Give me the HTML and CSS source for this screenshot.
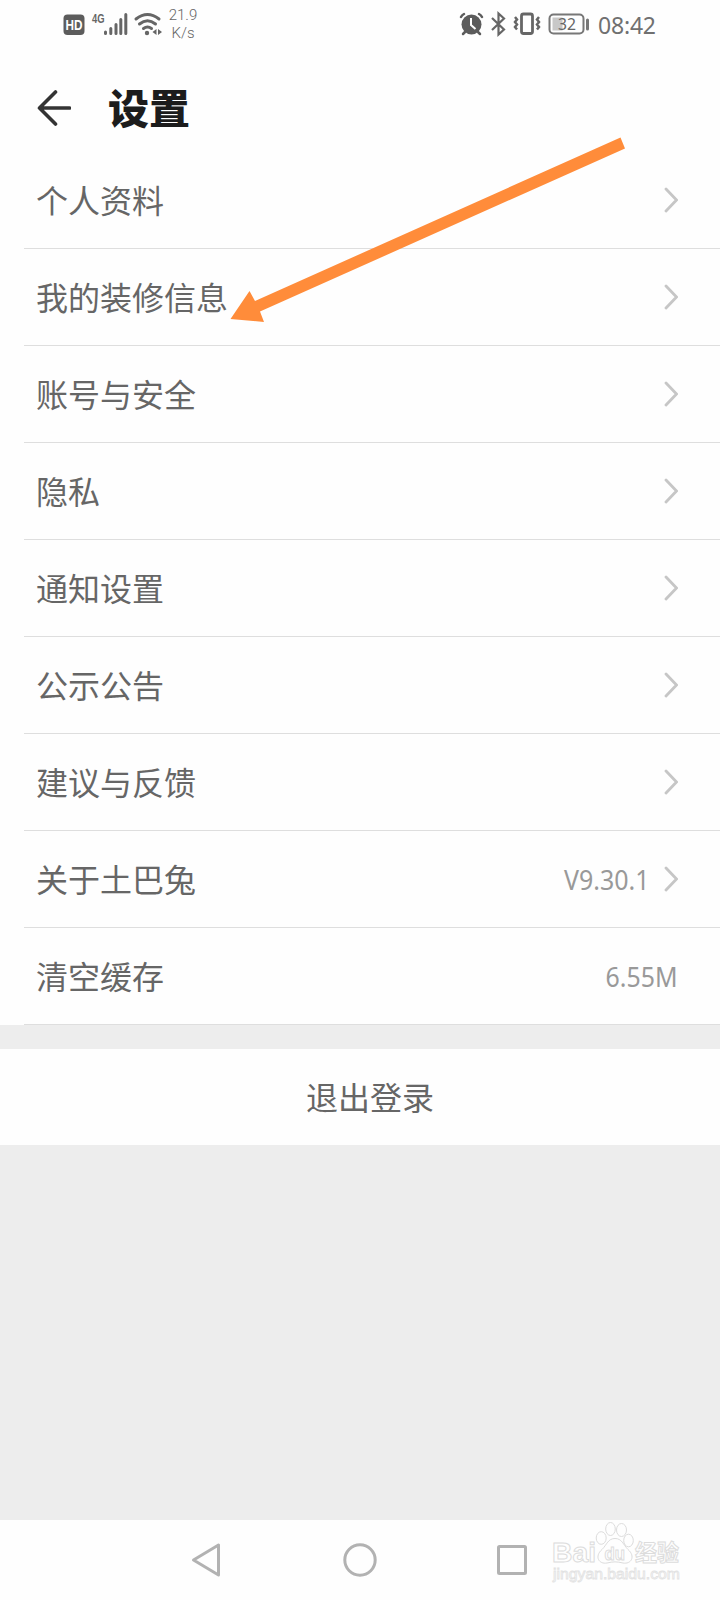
FILE: index.html
```html
<!DOCTYPE html>
<html lang="zh-CN">
<head>
<meta charset="utf-8">
<title>设置</title>
<link rel="stylesheet" href="styles.css">
</head>
<body>
<div class="screen">
  <header class="status">
    <svg class="status-left" width="112" height="48" viewBox="0 0 112 48">
      <rect x="0.5" y="14.500" width="21" height="20.500" rx="4" fill="#5c5c5c"/>
      <text class="hd" x="2.500" y="29.500" textLength="17" lengthAdjust="spacingAndGlyphs">HD</text>
      <text class="net" x="29" y="22.500" textLength="12.500" lengthAdjust="spacingAndGlyphs">4G</text>
      <path d="M42.500 32v1.500M47.800 28.500v5M53 24.500v9M57.800 19.500v14M62.800 14.500v19" stroke="#666" stroke-width="3" stroke-linecap="round"/>
      <g fill="none" stroke="#666" stroke-width="3" stroke-linecap="round">
        <path d="M73 19Q84.500 10 96 19"/><path d="M76.500 24Q84.500 17.500 92.500 24"/><path d="M80.500 28.500Q84.500 25.500 88.500 28.500"/>
      </g>
      <circle cx="84" cy="33" r="2.200" fill="#666"/>
      <path d="M93.500 29v6l-4-3zM95 29v6l4-3z" fill="#666"/>
    </svg>
    <div class="speed"><span>21.9</span><span>K/s</span></div>
    <div class="spacer"></div>
    <svg class="status-right" width="132" height="48" viewBox="458 0 132 48">
      <circle cx="471.500" cy="24.500" r="10" fill="#5c5c5c"/>
      <path d="M471 18v7l4.500 4" fill="none" stroke="#fff" stroke-width="2"/>
      <path d="M461 17q1-2 3-3M482 17q-1-2-3-3M465 32l-2 2M478 32l2 2" fill="none" stroke="#5c5c5c" stroke-width="2.500" stroke-linecap="round"/>
      <path d="M492 18l12 11.500-5.500 5v-21l5.500 5L492 30" fill="none" stroke="#666" stroke-width="2.200"/>
      <rect x="521.500" y="14" width="11" height="19.500" rx="2" fill="none" stroke="#666" stroke-width="2.800"/>
      <path d="M515 17l2 2.500-2 2.500 2 2.500-2 2.500 2 2.500M539 17l-2 2.500 2 2.500-2 2.500 2 2.500-2 2.500" fill="none" stroke="#666" stroke-width="2.500"/>
      <rect x="549.500" y="14.500" width="34" height="19" rx="4" fill="none" stroke="#777" stroke-width="2"/>
      <rect x="552.500" y="17.500" width="10" height="13" fill="#c8c8c8"/>
      <text class="battery" x="558" y="30" textLength="18" lengthAdjust="spacingAndGlyphs">32</text>
      <path d="M587.500 20v9" stroke="#777" stroke-width="3" stroke-linecap="round"/>
    </svg>
    <time class="clock">08:42</time>
  </header>

  <div class="titlebar">
    <svg class="back" width="34" height="36" viewBox="0 0 34 36"><path d="M18.500 2L2.500 18l16 16M2.500 18h30" fill="none" stroke="#333" stroke-width="3.600" stroke-linecap="round" stroke-linejoin="round"/></svg>
    <h1>设置</h1>
  </div>

  <main class="list">
    <div class="row"><span class="label">个人资料</span><svg class="chev" viewBox="0 0 14 26"><path d="M2 2l10.500 11L2 24"/></svg></div>
    <div class="row"><span class="label">我的装修信息</span><svg class="chev" viewBox="0 0 14 26"><path d="M2 2l10.500 11L2 24"/></svg></div>
    <div class="row"><span class="label">账号与安全</span><svg class="chev" viewBox="0 0 14 26"><path d="M2 2l10.500 11L2 24"/></svg></div>
    <div class="row"><span class="label">隐私</span><svg class="chev" viewBox="0 0 14 26"><path d="M2 2l10.500 11L2 24"/></svg></div>
    <div class="row"><span class="label">通知设置</span><svg class="chev" viewBox="0 0 14 26"><path d="M2 2l10.500 11L2 24"/></svg></div>
    <div class="row"><span class="label">公示公告</span><svg class="chev" viewBox="0 0 14 26"><path d="M2 2l10.500 11L2 24"/></svg></div>
    <div class="row"><span class="label">建议与反馈</span><svg class="chev" viewBox="0 0 14 26"><path d="M2 2l10.500 11L2 24"/></svg></div>
    <div class="row"><span class="label">关于土巴兔</span><svg class="value" width="88" height="48"><text x="1" y="34.500" textLength="85.500" lengthAdjust="spacingAndGlyphs">V9.30.1</text></svg><svg class="chev" viewBox="0 0 14 26"><path d="M2 2l10.500 11L2 24"/></svg></div>
    <div class="row"><span class="label">清空缓存</span><svg class="value" width="74" height="48"><text x="1.500" y="34.500" textLength="72" lengthAdjust="spacingAndGlyphs">6.55M</text></svg></div>
  </main>

  <button class="logout">退出登录</button>

  <nav class="navbar">
    <svg width="30" height="36" viewBox="0 0 30 36"><path d="M27.500 3v30L2.500 18z"/></svg>
    <svg width="34" height="36" viewBox="0 0 34 36"><circle cx="17" cy="18" r="15.200"/></svg>
    <svg width="32" height="36" viewBox="0 0 32 36"><rect x="2.500" y="4.500" width="27" height="27" rx="1"/></svg>
  </nav>

  <svg class="arrow" width="400" height="190" viewBox="228 136 400 190"><path d="M620.500 137.500L625 148.500L260 311.500L264 322L230.500 319L249.500 291L255 301z" fill="#ff8c3a"/></svg>

  <svg class="watermark" width="140" height="70" viewBox="548 1518 140 70">
    <text class="wm-big" x="552" y="1562" textLength="44" lengthAdjust="spacingAndGlyphs">Bai</text>
    <ellipse cx="601.200" cy="1538" rx="5" ry="6.300"/><ellipse cx="610.500" cy="1529" rx="4.800" ry="6.500"/><ellipse cx="621.500" cy="1530" rx="5" ry="6.500"/><ellipse cx="628.500" cy="1540.500" rx="4.800" ry="6.300"/>
    <path d="M615 1538.500c-7 0-8 6-13 11-8 7-3 15 5 13.500 6-1.500 10-1.500 16 0 8 1.500 13-6.500 5-13.500-5-5-6-11-13-11z"/>
    <text class="wm-du" x="604.500" y="1560" textLength="20.500" lengthAdjust="spacingAndGlyphs">du</text>
    <text class="wm-cn" x="635" y="1561" textLength="44" lengthAdjust="spacingAndGlyphs">经验</text>
    <text class="wm-url" x="553" y="1579" textLength="127" lengthAdjust="spacingAndGlyphs">jingyan.baidu.com</text>
  </svg>
</div>
</body>
</html>
```
FILE: styles.css
```css
* { box-sizing: border-box; }
body { margin: 0; }
.screen {
  position: relative;
  display: flex;
  flex-direction: column;
  width: 720px;
  height: 1600px;
  overflow: hidden;
  background: #ededed;
  font-family: "Noto Sans", "Kaiti SC", KaiTi, "Noto Sans CJK SC", sans-serif;
}
svg { display: block; flex: none; }
.status {
  display: flex;
  height: 48px;
  padding: 0 65px 0 63px;
  background: #fefefe;
}
.speed {
  display: flex;
  flex-direction: column;
  align-items: center;
  width: 32px;
  margin-left: -8px;
  padding-top: 6px;
  font: 300 15px/18px Roboto, sans-serif;
  color: #666;
}
.spacer { flex: 1; }
.hd { font: bold 14px "Liberation Sans", sans-serif; fill: #fff; }
.net { font: bold 13px "Liberation Sans", sans-serif; fill: #666; }
.battery { font: 17px "Noto Sans", sans-serif; fill: #666; }
.clock {
  width: 65px;
  padding: 8px 0 0 8px;
  font: 23px/34px "Noto Sans", sans-serif;
  letter-spacing: -0.2px;
  color: #707070;
  white-space: nowrap;
}
.titlebar {
  display: flex;
  align-items: center;
  gap: 37px;
  height: 104px;
  padding: 0 37px 0 37px;
  background: #fefefe;
}
.back { margin-top: 16px; }
h1 {
  margin: 12px 0 0;
  font: 900 41px/56px "Kaiti SC", KaiTi, "Noto Sans CJK SC", sans-serif;
  color: #1c1c1c;
}
.list { background: #fefefe; padding-left: 24px; }
.row {
  display: flex;
  align-items: center;
  height: 97px;
  padding: 0 42px 0 12px;
  border-bottom: 1px solid #dedede;
}
.label {
  flex: 1;
  padding-bottom: 3px;
  font: 32px/46px "Kaiti SC", KaiTi, "Noto Sans CJK SC", sans-serif;
  color: #666;
}
.value text { font: 27px "Noto Sans", sans-serif; fill: #999; }
.chev {
  width: 14px;
  height: 26px;
  margin-left: 13px;
  fill: none;
  stroke: #c6c6c6;
  stroke-width: 2.8;
  stroke-linecap: round;
}
.logout {
  height: 96px;
  margin: 24px 0 0;
  padding: 0 0 3px 20px;
  border: 0;
  background: #fefefe;
  font: 32px/46px "Kaiti SC", KaiTi, "Noto Sans CJK SC", sans-serif;
  color: #666;
}
.navbar {
  display: flex;
  align-items: center;
  height: 80px;
  margin-top: auto;
  padding-left: 191px;
  background: #fefefe;
  fill: none;
  stroke: #b2b2b2;
  stroke-width: 3;
  stroke-linejoin: round;
}
.navbar svg + svg { margin-left: 122px; }
.navbar svg:last-child { margin-left: 119px; }
.arrow { position: absolute; left: 228px; top: 136px; }
.watermark {
  position: absolute;
  left: 548px;
  top: 1518px;
  fill: #fefefe;
  stroke: #dcdcdc;
  stroke-width: 1;
}
.wm-big { font: bold 28px "Liberation Sans", sans-serif; }
.wm-du { font: bold 19px "Liberation Sans", sans-serif; }
.wm-cn { font: bold 23px "Noto Sans CJK SC", sans-serif; }
.wm-url { font: 15px "Liberation Sans", sans-serif; stroke: #e2e2e2; stroke-width: 0.8; }
```
